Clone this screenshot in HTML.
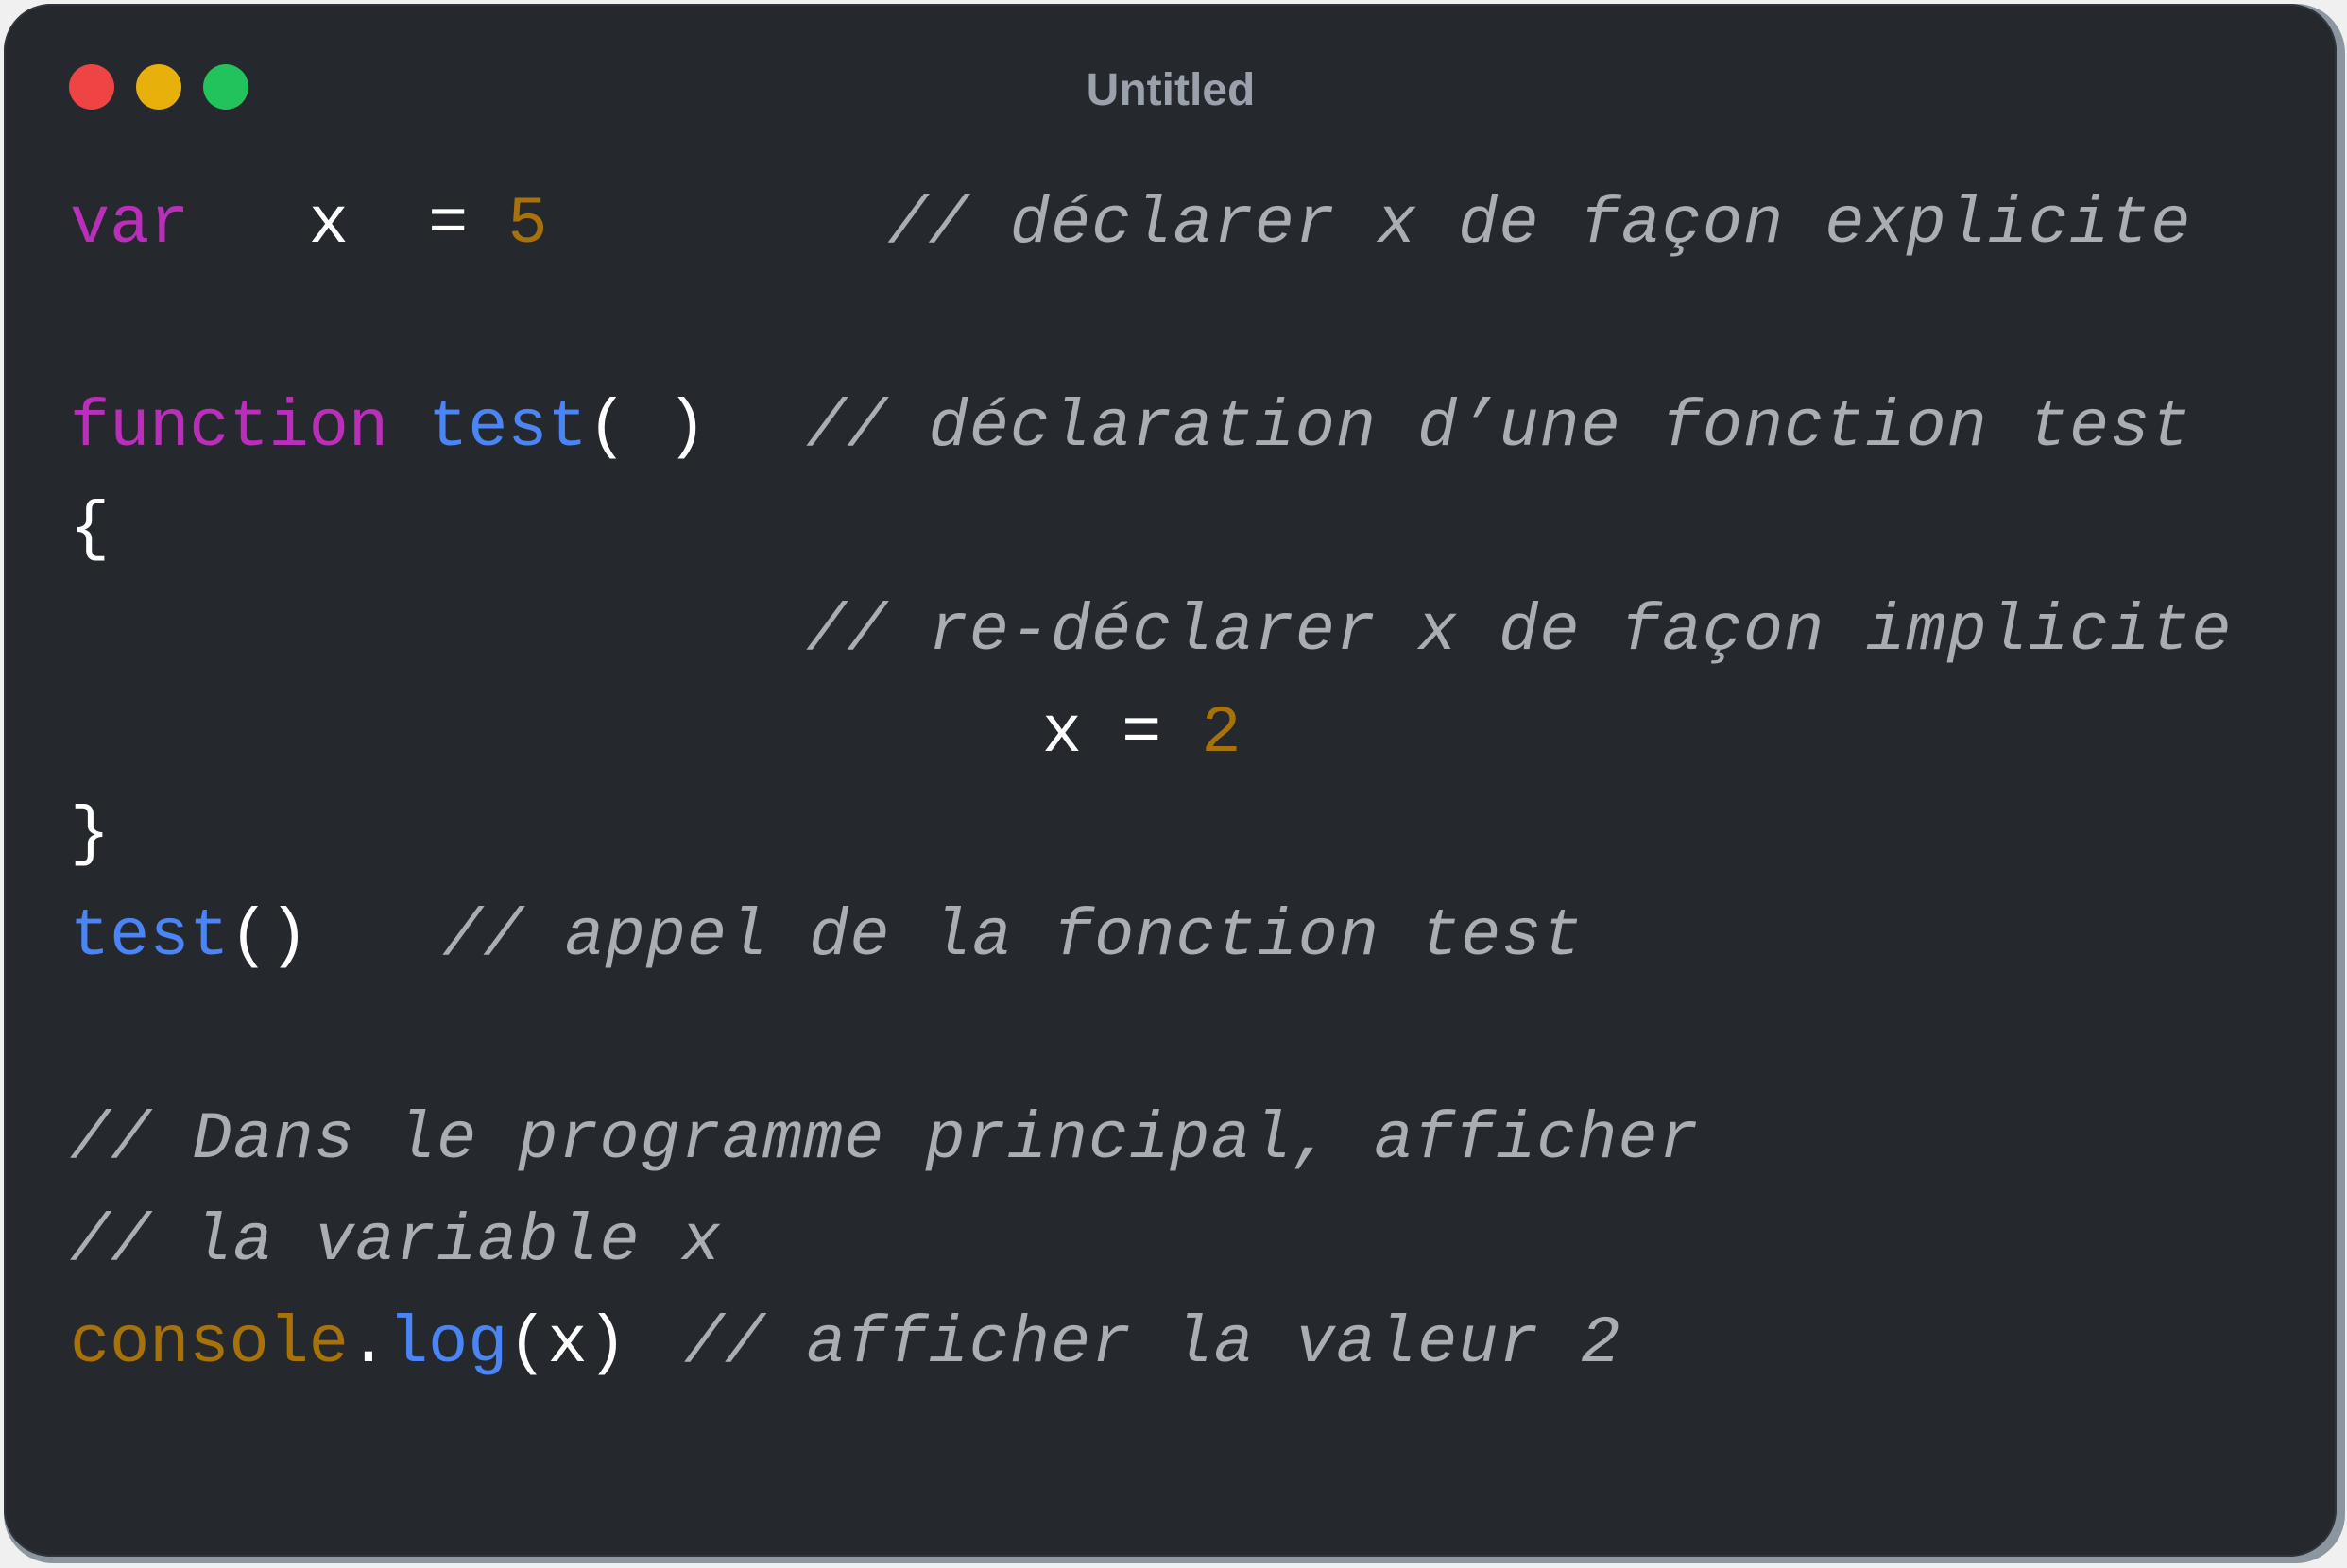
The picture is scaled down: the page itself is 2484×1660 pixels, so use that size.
<!DOCTYPE html>
<html><head><meta charset="utf-8"><style>
html,body{margin:0;padding:0;background:#f0f0f0;width:2484px;height:1660px;overflow:hidden;}
.win{position:absolute;left:4px;top:4px;width:2478px;height:1651px;border-radius:52px;background:#8c96a1;}
.inner{position:absolute;left:0;top:0;width:2469px;height:1644px;border-radius:50px;background:#25282c;box-shadow:inset 0 0 0 2px #30343b;}
.dot{position:absolute;top:68px;width:48px;height:48px;border-radius:50%;}
.title{position:absolute;left:0;width:2478px;top:66px;text-align:center;font:48px/60px "Liberation Sans",sans-serif;color:#9ba1ac;font-weight:600;}
pre{position:absolute;left:74px;top:185px;margin:0;font-family:"Liberation Mono",monospace;font-size:70.2px;line-height:107.7px;color:#fff;}
.k{color:#b92fb9}.f{color:#4a84f5}.n{color:#a8720a}.c{color:#abadb4;font-style:italic;letter-spacing:1px}
</style></head><body>
<div class="win"><div class="inner"></div></div>
<div class="dot" style="left:73px;background:#ef4444"></div>
<div class="dot" style="left:144px;background:#e8b00a"></div>
<div class="dot" style="left:215px;background:#22c35d"></div>
<div class="title">Untitled</div>
<pre><span class="k">var</span>   x  = <span class="n">5</span>         <span class="c" style="margin-left:-19px">// déclarer x de façon explicite</span>

<span class="k">function</span> <span class="f">test</span>( )   <span class="c" style="margin-left:-21px">// déclaration d’une fonction test</span>
{
                   <span class="c" style="margin-left:-21px">// re-déclarer x de façon implicite</span>
                        <span style="margin-left:18px">x = <span class="n">2</span></span>
}
<span class="f">test</span>()    <span class="c" style="margin-left:-27px">// appel de la fonction test</span>

<span class="c">// Dans le programme principal, afficher</span>
<span class="c">// la variable x</span>
<span class="n">console</span>.<span class="f">log</span>(x)  <span class="c" style="margin-left:-24px">// afficher la valeur 2</span>
</pre>
</body></html>
